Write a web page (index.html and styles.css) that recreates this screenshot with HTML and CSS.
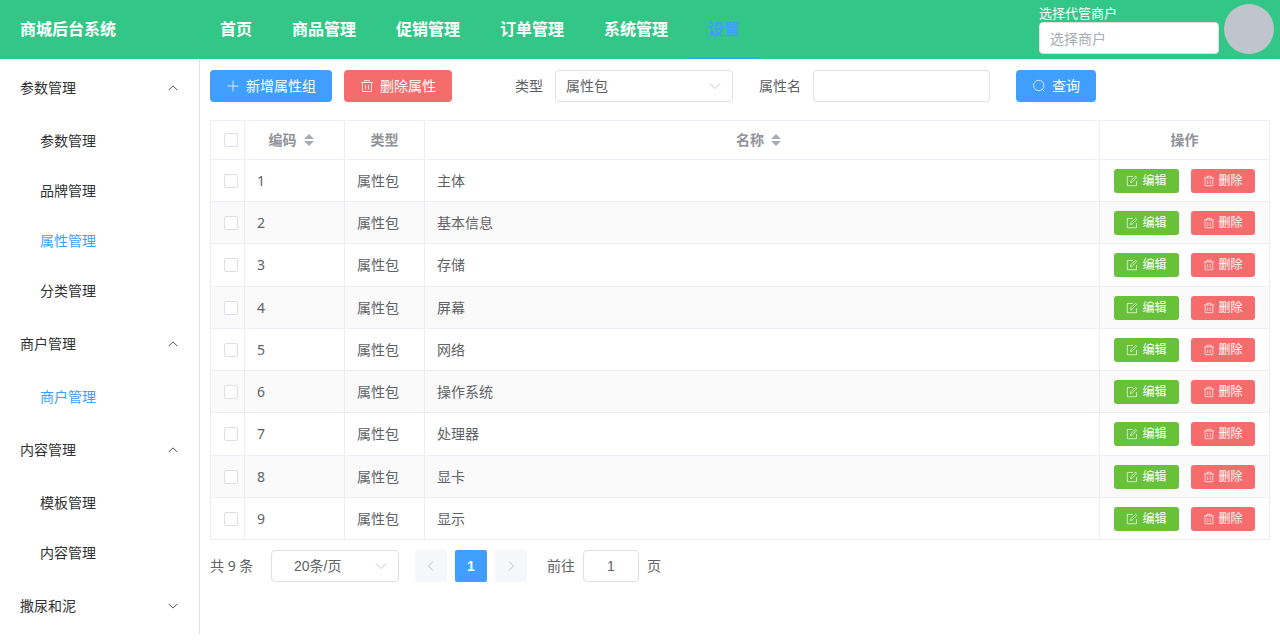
FILE: index.html
```html
<!DOCTYPE html>
<html lang="zh-CN">
<head>
<meta charset="utf-8">
<meta name="viewport" content="width=device-width, initial-scale=1">
<title>商城后台系统</title>
<link rel="stylesheet" href="styles.css">
</head>
<body>
<svg class="sprite" aria-hidden="true">
  <symbol id="i-plus" viewBox="0 0 14 14"><path d="M7 1.500v11M1.500 7h11"/></symbol>
  <symbol id="i-trash" viewBox="0 0 14 14"><path d="M1 3.500h12M4.500 3.500V1.500h5v2M2.500 3.500v9h9v-9M5.500 6v4.500M8.500 6v4.500"/></symbol>
  <symbol id="i-search" viewBox="0 0 14 14"><circle cx="6.700" cy="6.500" r="5.200"/><path d="M10.500 10.500l2 2"/></symbol>
  <symbol id="i-edit" viewBox="0 0 14 14"><path d="M8 1.700H1.500v10.800h10.800V7M5.300 8.900l.5-2.200 5.300-5.300 1.500 1.500-5.300 5.300z"/></symbol>
  <symbol id="i-down" viewBox="0 0 14 14"><path d="M2 4.500l5 5 5-5"/></symbol>
  <symbol id="i-up" viewBox="0 0 14 14"><path d="M2 9.500l5-5 5 5"/></symbol>
  <symbol id="i-left" viewBox="0 0 14 14"><path d="M9 2.500L4.500 7 9 11.500"/></symbol>
  <symbol id="i-right" viewBox="0 0 14 14"><path d="M5 2.500L9.500 7 5 11.500"/></symbol>
</svg>

<header class="header">
  <h1 class="brand">商城后台系统</h1>
  <nav class="topnav">
    <a href="#">首页</a>
    <a href="#">商品管理</a>
    <a href="#">促销管理</a>
    <a href="#">订单管理</a>
    <a href="#">系统管理</a>
    <a href="#" class="active">设置</a>
  </nav>
  <div class="merchant">
    <label for="merchant">选择代管商户</label>
    <input id="merchant" class="field" type="text" placeholder="选择商户">
  </div>
  <span class="avatar"></span>
</header>

<div class="layout">
  <aside class="sidebar">
    <button type="button" class="group">参数管理<svg class="icon"><use href="#i-up"/></svg></button>
    <a href="#">参数管理</a>
    <a href="#">品牌管理</a>
    <a href="#" class="active">属性管理</a>
    <a href="#">分类管理</a>
    <button type="button" class="group">商户管理<svg class="icon"><use href="#i-up"/></svg></button>
    <a href="#" class="active">商户管理</a>
    <button type="button" class="group">内容管理<svg class="icon"><use href="#i-up"/></svg></button>
    <a href="#">模板管理</a>
    <a href="#">内容管理</a>
    <button type="button" class="group">撒尿和泥<svg class="icon"><use href="#i-down"/></svg></button>
  </aside>

  <main class="main">
    <form class="toolbar">
      <div class="actions">
        <button type="button" class="btn primary"><svg class="icon"><use href="#i-plus"/></svg>新增属性组</button>
        <button type="button" class="btn danger"><svg class="icon"><use href="#i-trash"/></svg>删除属性</button>
      </div>
      <div class="filter">
        <label for="type">类型</label>
        <span class="select">
          <select id="type" class="field"><option>属性包</option></select>
          <svg class="icon"><use href="#i-down"/></svg>
        </span>
      </div>
      <div class="filter">
        <label for="name">属性名</label>
        <input id="name" class="field" type="text">
      </div>
      <button type="button" class="btn primary"><svg class="icon"><use href="#i-search"/></svg>查询</button>
    </form>

    <table class="grid">
      <colgroup><col class="c-check"><col class="c-code"><col class="c-type"><col><col class="c-ops"></colgroup>
      <thead>
        <tr>
          <th class="check"><input type="checkbox" aria-label="全选"></th>
          <th><span class="sort">编码<i class="carets"></i></span></th>
          <th>类型</th>
          <th><span class="sort">名称<i class="carets"></i></span></th>
          <th>操作</th>
        </tr>
      </thead>
      <tbody id="rows"></tbody>
    </table>

    <div class="pager">
      <span class="total">共 9 条</span>
      <span class="select size">
        <select class="field" aria-label="每页条数"><option>20条/页</option></select>
        <svg class="icon"><use href="#i-down"/></svg>
      </span>
      <div class="pages">
        <button type="button" disabled aria-label="上一页"><svg class="icon"><use href="#i-left"/></svg></button>
        <button type="button" class="current">1</button>
        <button type="button" disabled aria-label="下一页"><svg class="icon"><use href="#i-right"/></svg></button>
      </div>
      <div class="jump">
        <label for="page">前往</label>
        <input id="page" class="field" type="text" value="1">
        <span>页</span>
      </div>
    </div>
  </main>
</div>
<script src="app.js"></script>
</body>
</html>
```

FILE: styles.css
```css
* { box-sizing: border-box; }

body {
  margin: 0;
  background: #fff;
  color: #606266;
  font: 14px/20px "Noto Sans", "Noto Sans CJK SC", sans-serif;
}

button, input, select { font: inherit; margin: 0; }
button { border: 0; cursor: pointer; }
a { text-decoration: none; }

.sprite { display: none; }

.icon {
  width: 14px;
  height: 14px;
  flex: none;
  fill: none;
  stroke: currentColor;
  stroke-width: 1;
}

/* Header */
.header {
  display: flex;
  align-items: stretch;
  height: 60px;
  padding-right: 6px;
  background: #33c787;
  border-bottom: 1px solid #f2fffa;
  color: #fff;
}

.brand {
  width: 200px;
  margin: 0;
  padding-left: 20px;
  font-size: 16px;
  line-height: 59px;
}

.topnav { display: flex; flex: 1; }

.topnav a {
  padding: 0 20px;
  border-bottom: 2px solid transparent;
  color: #fff;
  font-size: 16px;
  font-weight: bold;
  line-height: 59px;
}

.topnav .active { color: #409eff; border-color: #409eff; }

.merchant {
  display: flex;
  flex-direction: column;
  justify-content: flex-end;
  width: 180px;
  padding-bottom: 5px;
  font-size: 13px;
  line-height: 18px;
}

.merchant .field { font-size: 14px; }

.avatar {
  width: 50px;
  height: 50px;
  margin: 4px 0 0 5px;
  border-radius: 50%;
  background: #c0c4cc;
}

/* Form controls */
.field {
  width: 100%;
  height: 32px;
  padding: 0 10px;
  border: 1px solid #dcdfe6;
  border-radius: 4px;
  background: #fff;
  color: #606266;
  appearance: none;
}

.field::placeholder { color: #a8abb2; opacity: 1; }
select.field { padding: 0 30px 0 10px; }

.select { position: relative; display: block; }

.select .icon {
  position: absolute;
  top: 9px;
  right: 11px;
  color: #c0c4cc;
  pointer-events: none;
}

.btn {
  display: inline-flex;
  align-items: center;
  gap: 6px;
  height: 32px;
  padding: 0 16px;
  border-radius: 4px;
  color: #fff;
  white-space: nowrap;
}

.btn .icon { opacity: 0.8; }

.primary { background: #409eff; }
.danger { background: #f56c6c; }
.success { background: #67c23a; }

.btn.small {
  gap: 4px;
  height: 24px;
  padding: 0 12px;
  border-radius: 3px;
  font-size: 12px;
}

.small .icon { width: 12px; height: 12px; }

/* Sidebar */
.layout { display: flex; align-items: flex-start; }

.sidebar {
  width: 200px;
  flex: none;
  border-right: 1px solid #dcdfe6;
}

.sidebar a {
  display: block;
  padding-left: 40px;
  color: #303133;
  line-height: 50px;
}

.sidebar .active { color: #409eff; }

.group {
  display: flex;
  align-items: center;
  justify-content: space-between;
  width: 100%;
  height: 56px;
  padding: 0 20px;
  background: none;
  color: #303133;
}

.group .icon { width: 12px; height: 12px; }

/* Toolbar */
.main { flex: 1; min-width: 0; padding: 10px; }

.toolbar {
  display: flex;
  align-items: center;
  margin-bottom: 18px;
}

.actions { display: flex; gap: 12px; margin-right: 63px; }

.filter { display: flex; align-items: center; gap: 12px; margin-right: 26px; }
.filter label { white-space: nowrap; }
.filter .select { width: 178px; }
.filter > .field { width: 177px; }

/* Table */
.grid {
  width: 100%;
  table-layout: fixed;
  border: solid #ebeef5;
  border-width: 1px 0 0 1px;
  border-spacing: 0;
}

.c-check { width: 34px; }
.c-code { width: 100px; }
.c-type { width: 80px; }
.c-ops { width: 170px; }

.grid th, .grid td {
  height: 42px;
  padding: 0 12px;
  border: solid #ebeef5;
  border-width: 0 1px 1px 0;
  text-align: left;
}

.grid th { height: 39px; color: #909399; text-align: center; }
.grid tbody tr:nth-child(even) { background: #fafafa; }
.grid tbody tr:nth-child(4n+3) td { height: 43px; }
.grid .check { padding: 0 0 0 13px; text-align: left; }

.check input {
  display: block;
  width: 14px;
  height: 14px;
  margin: 0;
  border: 1px solid #dcdfe6;
  border-radius: 2px;
  background: #fff;
  appearance: none;
}

.check input:checked { background: #409eff; border-color: #409eff; }

.sort { display: inline-flex; align-items: center; }

.carets {
  display: flex;
  flex-direction: column;
  align-items: center;
  gap: 2px;
  width: 24px;
}

.carets::before, .carets::after { content: ""; border: 5px solid transparent; }
.carets::before { border-top: 0; border-bottom-color: #a8abb2; }
.carets::after { border-bottom: 0; border-top-color: #a8abb2; }

.ops { display: flex; justify-content: center; gap: 12px; }

/* Pagination */
.pager {
  display: flex;
  align-items: center;
  gap: 16px;
  margin-top: 10px;
}

.total { min-width: 45px; }

.size { width: 128px; }
.size .field { padding-left: 22px; font-family: "Liberation Sans", "Noto Sans CJK SC", sans-serif; }

.pages { display: flex; gap: 8px; }

.pages button {
  display: flex;
  align-items: center;
  justify-content: center;
  width: 32px;
  height: 32px;
  padding: 0;
  border-radius: 2px;
  background: #f5f7fa;
  color: #c0c4cc;
}

.pages .current {
  background: #409eff;
  color: #fff;
  font-family: "Liberation Sans", sans-serif;
  font-weight: bold;
}

.jump { display: flex; align-items: center; gap: 8px; padding-left: 4px; }
.jump .field { width: 56px; text-align: center; font-family: "Liberation Sans", sans-serif; }
```

FILE: app.js
```js
const names = ["主体", "基本信息", "存储", "屏幕", "网络", "操作系统", "处理器", "显卡", "显示"];

document.getElementById("rows").innerHTML = names.map((name, i) => `
  <tr>
    <td class="check"><input type="checkbox" aria-label="选择 ${name}"></td>
    <td>${i + 1}</td>
    <td>属性包</td>
    <td>${name}</td>
    <td>
      <div class="ops">
        <button type="button" class="btn small success"><svg class="icon"><use href="#i-edit"/></svg>编辑</button>
        <button type="button" class="btn small danger"><svg class="icon"><use href="#i-trash"/></svg>删除</button>
      </div>
    </td>
  </tr>`).join("");
```
